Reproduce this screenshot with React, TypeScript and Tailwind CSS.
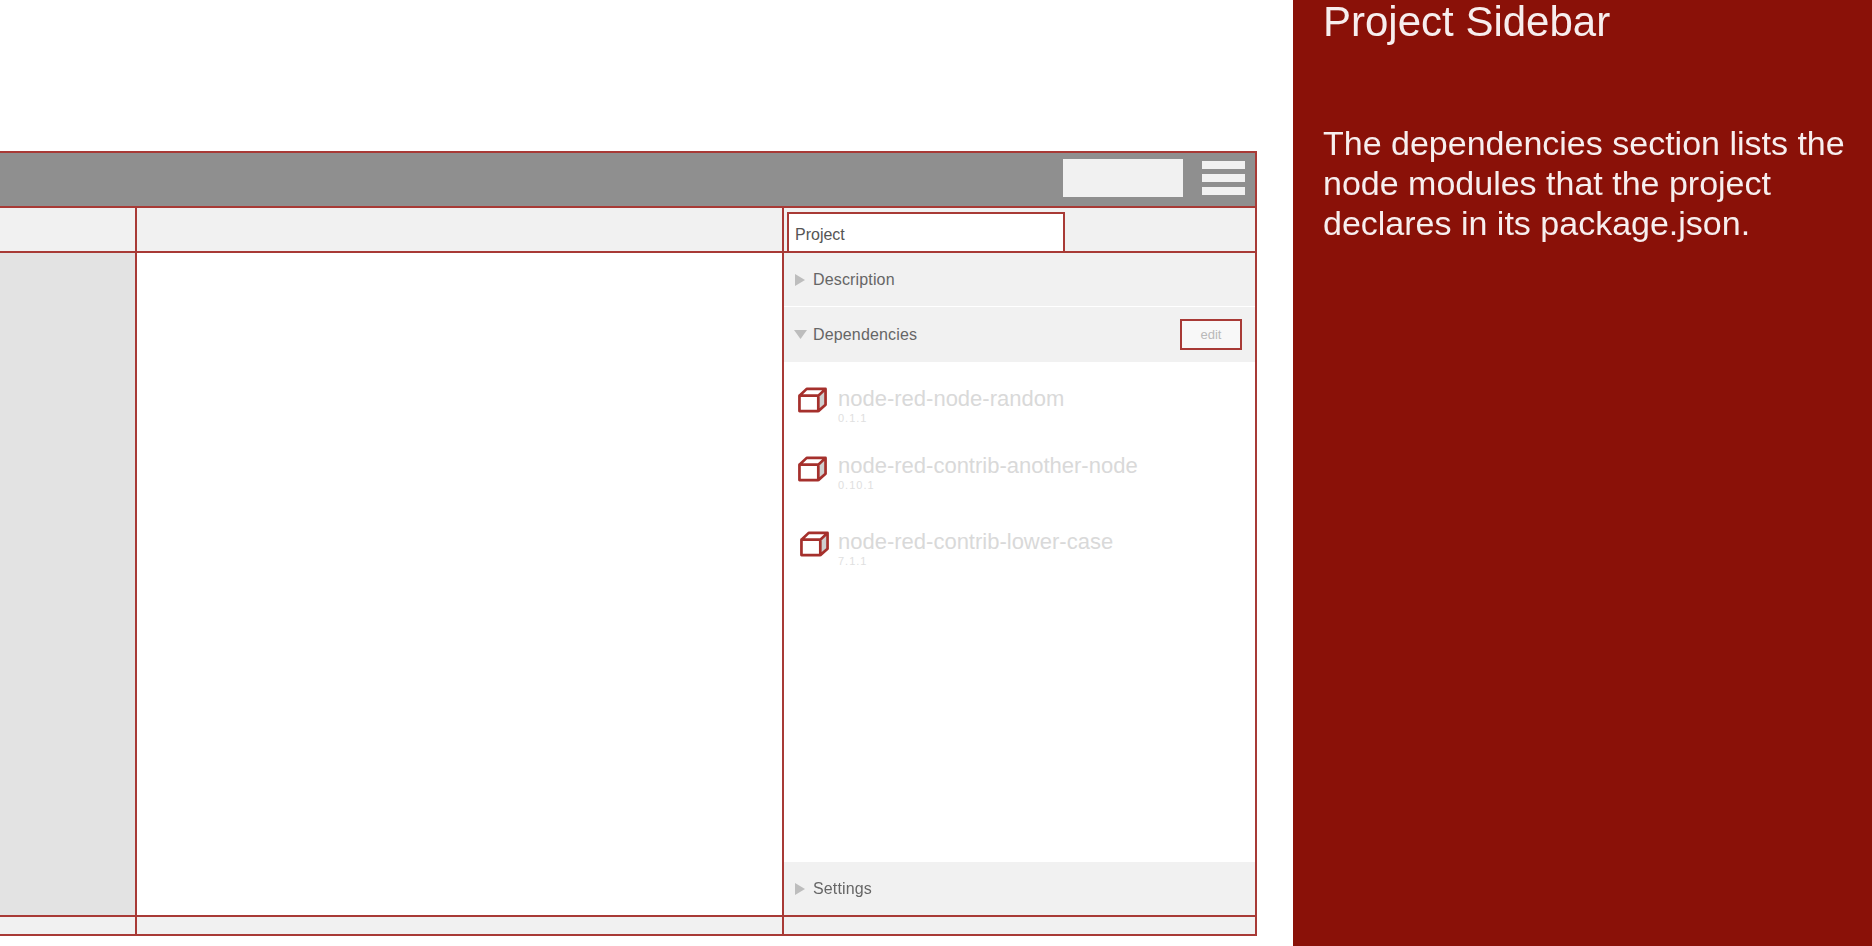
const edge = "border-[#a83a36]";

const modules = [
  { name: "node-red-node-random", version: "0.1.1", row: "mt-[24px]", icon: "mt-[1px] ml-0" },
  { name: "node-red-contrib-another-node", version: "0.10.1", row: "mt-[28px]", icon: "mt-[3px] ml-0" },
  { name: "node-red-contrib-lower-case", version: "7.1.1", row: "mt-[37px]", icon: "mt-[2px] ml-[2px]" },
];

const Cube = ({ className }: { className: string }) => (
  <svg viewBox="0 0 30 26" className={`h-[26px] w-[29px] ${className}`}>
    <path d="M21 8.5 L28.5 1.5 V18 L21 24.5 Z" fill="#cfcfcf" />
    <path
      d="M1.5 8.5 H21 V24.5 H1.5 Z M1.5 8.5 L9 1.5 H28.5 L21 8.5 M28.5 1.5 V18 L21 24.5"
      fill="none"
      stroke="#a5302c"
      strokeWidth="2.8"
      strokeLinejoin="round"
    />
  </svg>
);

const Arrow = ({ open }: { open?: boolean }) => (
  <svg viewBox="0 0 13 12" className="h-[12px] w-[13px] shrink-0">
    <path d={open ? "M0 1 H13 L6.5 10 Z" : "M1 0 L11 6 L1 12 Z"} fill="#bdbdbd" />
  </svg>
);

const Section = ({
  title,
  open,
  className,
  children,
}: {
  title: string;
  open?: boolean;
  className: string;
  children?: React.ReactNode;
}) => (
  <div className={`flex items-center gap-[6px] bg-[#f1f1f1] pl-[10px] pr-[13px] ${className}`}>
    <Arrow open={open} />
    <span className="text-[16px] tracking-[0.15px] text-[#666666]">{title}</span>
    {children}
  </div>
);

const Wireframe = () => (
  <div className={`mt-[151px] flex h-[785px] w-[1257px] flex-col border-y-2 border-r-2 ${edge}`}>
    <div className={`flex h-[55px] shrink-0 items-center border-b-2 bg-[#8f8f8f] pb-[3px] pl-[1063px] ${edge}`}>
      <div className="h-[38px] w-[120px] bg-[#f1f1f1]" />
      <div className="ml-[19px] flex w-[43px] flex-col gap-[5px]">
        <div className="h-[8px] bg-[#f1f1f1]" />
        <div className="h-[8px] bg-[#f1f1f1]" />
        <div className="h-[8px] bg-[#f1f1f1]" />
      </div>
    </div>

    <div className="flex min-h-0 flex-1">
      <div className={`flex w-[137px] shrink-0 flex-col border-r-2 ${edge}`}>
        <div className={`h-[45px] shrink-0 border-b-2 bg-[#f1f1f1] ${edge}`} />
        <div className="flex-1 bg-[#e3e3e3]" />
        <div className={`h-[19px] shrink-0 border-t-2 bg-[#f1f1f1] ${edge}`} />
      </div>

      <div className={`flex w-[647px] shrink-0 flex-col border-r-2 ${edge}`}>
        <div className={`h-[45px] shrink-0 border-b-2 bg-[#f1f1f1] ${edge}`} />
        <div className="flex-1 bg-white" />
        <div className={`h-[19px] shrink-0 border-t-2 bg-[#f1f1f1] ${edge}`} />
      </div>

      <div className="flex min-w-0 flex-1 flex-col">
        <div className={`h-[45px] shrink-0 border-b-2 bg-[#f1f1f1] pl-[3px] pt-[4px] ${edge}`}>
          <div className={`flex h-[39px] w-[278px] items-center border-x-2 border-t-2 bg-white pl-[6px] pt-[5px] text-[16px] text-[#555555] ${edge}`}>
            Project
          </div>
        </div>

        <div className="flex min-h-0 flex-1 flex-col bg-white">
          <Section title="Description" className="h-[53px] shrink-0" />
          <Section title="Dependencies" open className="mt-[1px] h-[55px] shrink-0">
            <div className={`ml-auto flex h-[31px] w-[62px] items-center justify-center border-2 bg-[#f8f8f8] text-[13px] text-[#b9b9b9] ${edge}`}>
              edit
            </div>
          </Section>

          <div className="flex-1 pl-[14px]">
            {modules.map((m) => (
              <div key={m.name} className={`flex ${m.row}`}>
                <div className="w-[40px] shrink-0">
                  <Cube className={m.icon} />
                </div>
                <div>
                  <div className="text-[22px] leading-[25px] text-[#d9d9d9]">{m.name}</div>
                  <div className="text-[11px] leading-[14px] tracking-[1px] text-[#e0e0e0]">{m.version}</div>
                </div>
              </div>
            ))}
          </div>

          <Section title="Settings" className="h-[53px] shrink-0" />
        </div>

        <div className={`h-[19px] shrink-0 border-t-2 bg-[#f1f1f1] ${edge}`} />
      </div>
    </div>
  </div>
);

export default function App() {
  return (
    <div className="h-[946px] w-[1872px] overflow-hidden">
      <div className="flex h-full w-full bg-white font-['Liberation_Sans',Arial,sans-serif] blur-[0.7px]">
        <Wireframe />
        <aside className="ml-[36px] flex-1 bg-[#8a1108] pl-[30px] text-[#f7eeee]">
          <h1 className="pt-[2px] text-[42px] leading-[40px]">Project Sidebar</h1>
          <p className="mt-[81px] w-[545px] text-[34px] leading-[40px]">
            The dependencies section lists the node modules that the project declares in its package.json.
          </p>
        </aside>
      </div>
    </div>
  );
}
